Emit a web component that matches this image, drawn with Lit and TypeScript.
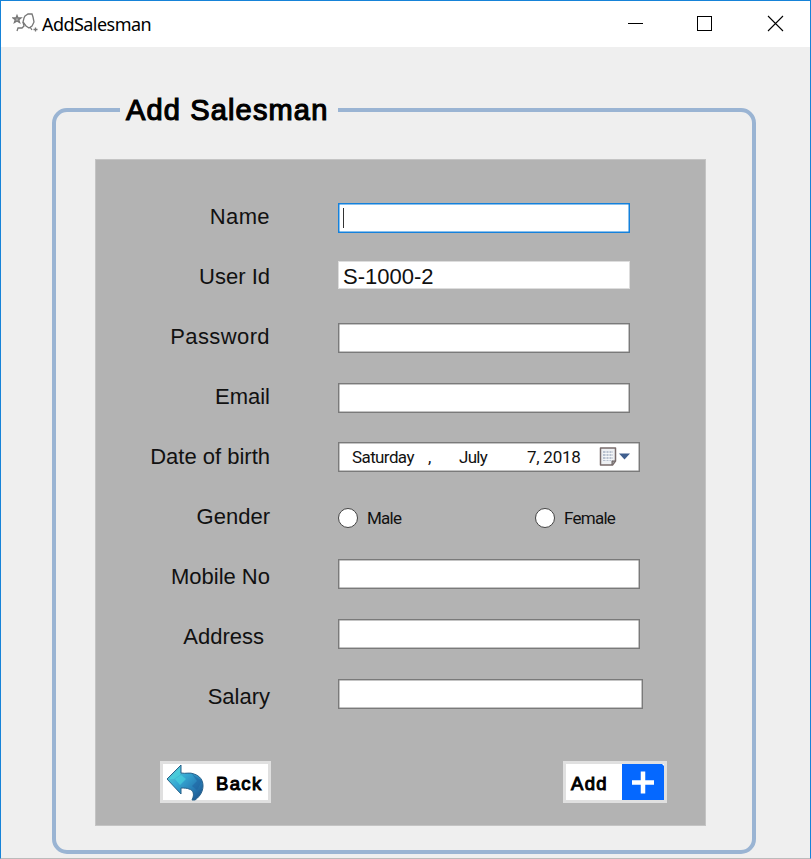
import { LitElement, html, css, svg, nothing } from "lit";
import { customElement, property } from "lit/decorators.js";
import { classMap } from "lit/directives/class-map.js";

@customElement("title-bar")
class TitleBar extends LitElement {
  static styles = css`
    :host { display: flex; height: 46px; background: #fff; align-items: center; }
    .app-icon { margin: 0 0 3px 11px; width: 26px; height: 22px; }
    .title { margin-left: 4px; flex: 1; font: 18px/24px "Noto Sans", sans-serif; letter-spacing: -0.55px; color: #000; }
    .controls { display: flex; width: 210px; height: 46px; }
    .controls svg { width: 70px; height: 46px; }
  `;
  render() {
    return html`
      <svg class="app-icon" viewBox="0 0 26 22" fill="none" stroke="#777" stroke-width="1.3">
        <path d="M5 3.500l1 2.500h3l-2.300 1.800.9 2.800L5 9l-2.600 1.600.9-2.800L1 6h3z" fill="#aaa" />
        <path d="M13 4l3-2 4 0 1 3 1 5-2 4-3 2-3-2-3-4 1-4z" />
        <path d="M18 15l2 3M11 10l1 4-2 2-4 0-1 3" />
        <path d="M23.500 15.500v4M21.500 17.500h4" />
      </svg>
      <span class="title">AddSalesman</span>
      <div class="controls">
        <svg viewBox="0 0 70 46"><path d="M28 22.500h15" stroke="#000" /></svg>
        <svg viewBox="0 0 70 46"><rect x="27.500" y="15.500" width="14" height="14" fill="none" stroke="#000" /></svg>
        <svg viewBox="0 0 70 46"><path d="M28 15l15 15M43 15l-15 15" stroke="#000" stroke-width="1.100" /></svg>
      </div>
    `;
  }
}

@customElement("form-row")
class FormRow extends LitElement {
  @property() label = "";
  static styles = css`
    :host { display: flex; height: 60px; align-items: flex-start; }
    .label { flex: none; width: 174px; margin: 16px 68px 0 0; text-align: right; white-space: pre;
      font: 22px/28px "Liberation Sans", sans-serif; color: #111; }
    :host(.inset) .label { width: 168px; margin-right: 74px; }
    :host(.loose) .label { letter-spacing: 0.4px; }
  `;
  render() {
    return html`<span class="label">${this.label}</span><slot></slot>`;
  }
}

const backArrow = svg`
  <defs>
    <linearGradient id="arrow" x1="0" y1="0" x2="1" y2="1">
      <stop offset="0" stop-color="#68d5d0" /><stop offset=".4" stop-color="#36a9d3" />
      <stop offset=".7" stop-color="#287db5" /><stop offset="1" stop-color="#194a83" />
    </linearGradient>
  </defs>
  <path d="M0 15L14 1v8c5 1 9-1 13 1 6 2 9 6 9 12 0 7-5 12-8 14h-3c3-6 1-10-3-11-2-1-5-1-8-1v6z"
    fill="url(#arrow)" stroke="#28618a" stroke-width="1" stroke-linejoin="round" />
  <path d="M2 15L13 4v7l-6 4zM8 15l6-4 5 4-6 6z" fill="#4bdce0" opacity=".55" />
  <path d="M25 10l5 7-5 5 5 4 5-9z" fill="#1d5f9e" opacity=".5" />
`;

@customElement("app-root")
class AppRoot extends LitElement {
  static styles = css`
    :host { display: block; height: 859px; box-sizing: border-box; overflow: hidden; background: #efefef;
      border: 1px solid #1683d8; border-bottom-color: #bbb; }
    * { box-sizing: border-box; }
    .group { margin: 61px 54px 0 51px; height: 746px; border: 4px solid #9ab4d3; border-radius: 15px; padding: 48px 0 0 39px; }
    .caption { width: 218px; height: 40px; margin: -70px 0 29px 25px; padding-left: 6px; background: #efefef;
      font: 29px/40px "Liberation Sans", sans-serif; letter-spacing: 1.15px; -webkit-text-stroke: 1.2px #000;
      color: #000; white-space: nowrap; }
    .panel { width: 611px; height: 667px; background: #b3b3b3; border: 1px solid #c4c4c4; padding: 27px 0 0 0; }
    .box { width: 292px; height: 30px; margin-top: 16px; background: #fff; border: 1px solid #7a7a7a;
      box-shadow: inset 0 0 0 0.5px #8a8a8a; display: flex; align-items: center; }
    .focused { border-color: #1481dc; box-shadow: inset 0 0 0 0.5px #1481dc; }
    .caret { width: 1px; height: 20px; margin-left: 4px; background: #333; }
    .readonly { height: 28px; margin-top: 14px; border-color: #ddd; box-shadow: none; padding: 3px 0 0 4px;
      font: 22px/26px "Liberation Sans", sans-serif; color: #111; }
    .wide { width: 302px; margin-top: 12px; }
    .widest { width: 305px; margin-top: 12px; }
    .date { width: 302px; margin-top: 15px; padding-left: 13px; }
    .date, .choice { font: 17px/22px Roboto, sans-serif; letter-spacing: -0.75px; color: #111; }
    .weekday { width: 76px; letter-spacing: -0.6px; }
    .comma { width: 31px; }
    .month { width: 68px; }
    .day { width: 71px; letter-spacing: -0.25px; }
    .date svg { width: 34px; height: 24px; }
    .choice { display: flex; flex: none; align-items: center; width: 197px; margin-top: 19px; height: 24px; gap: 9px; }
    .choice:last-child { width: 100px; }
    .radio { width: 20px; height: 20px; border-radius: 50%; background: #fff; border: 1.5px solid #444; }
    .actions { display: flex; justify-content: space-between; margin: 34px 38px 0 64px; }
    .button { display: flex; align-items: center; height: 42px; background: #fff; border: 3px solid #e0e0e0;
      font: 18.5px/24px "Liberation Sans", sans-serif; letter-spacing: 1.35px; -webkit-text-stroke: 1px #000; color: #000; }
    .button span { padding-top: 3px; }
    .button svg { -webkit-text-stroke: 0; }
    .back { width: 111px; padding-left: 4px; gap: 12px; }
    .back svg { width: 37px; height: 37px; flex: none; }
    .add { width: 104px; padding-left: 5px; justify-content: space-between; }
    .add svg { width: 42px; height: 36px; flex: none; }
  `;

  private field(label: string, size = "", spacing = "") {
    return html`<form-row class=${classMap({ inset: spacing === "inset", loose: spacing === "loose" })} label=${label}>
      <div class="box ${size}">${size === "focused" ? html`<span class="caret"></span>` : nothing}</div>
    </form-row>`;
  }

  render() {
    return html`
      <title-bar></title-bar>
      <section class="group">
        <div class="caption">Add Salesman</div>
        <div class="panel">
          ${this.field("Name", "focused", "loose")}
          <form-row label="User Id"><div class="box readonly">S-1000-2</div></form-row>
          ${this.field("Password", "", "loose")}
          ${this.field("Email")}
          <form-row label="Date of birth">
            <div class="box date">
              <span class="weekday">Saturday</span><span class="comma">,</span>
              <span class="month">July</span><span class="day">7, 2018</span>
              <svg viewBox="0 0 34 24">
                <path d="M2.500 3h15v13l-3 4h-12z" fill="#eef0f3" stroke="#786b6b" stroke-width="1.500" stroke-linejoin="round" />
                <path d="M5 6h10v10H5z" fill="#b9c2d0" />
                <path d="M5 8.500h10M5 11.500h10M5 14.500h10M8 6v10M11 6v10M14 6v10" stroke="#fff" stroke-width=".8" />
                <path d="M14 20v-4h3" fill="#999" stroke="#665d5d" />
                <path d="M21 8.500h11l-5.500 6z" fill="#405f8f" />
              </svg>
            </div>
          </form-row>
          <form-row label="Gender">
            <div class="choice"><span class="radio"></span>Male</div>
            <div class="choice"><span class="radio"></span>Female</div>
          </form-row>
          ${this.field("Mobile No", "wide", "")}
          ${this.field("Address", "wide", "inset")}
          ${this.field("Salary", "widest")}
          <div class="actions">
            <div class="button back"><svg viewBox="0 0 37 37">${backArrow}</svg><span>Back</span></div>
            <div class="button add">
              <span>Add</span>
              <svg viewBox="0 0 42 36"><path d="M0 0h40l2 2v34H0z" fill="#0568ff" /><path d="M10 18.500h22M21 7.500v22" stroke="#fff" stroke-width="4.500" /></svg>
            </div>
          </div>
        </div>
      </section>
    `;
  }
}
